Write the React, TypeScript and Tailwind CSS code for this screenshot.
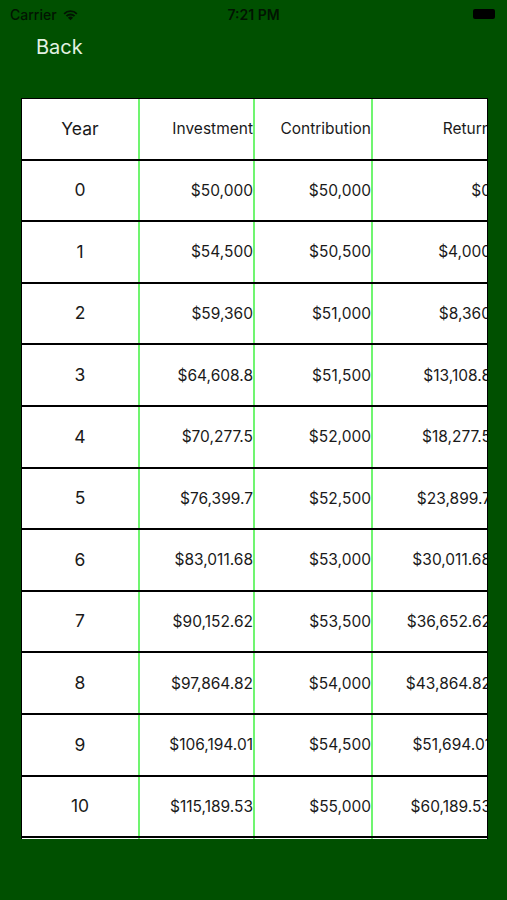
import React from "react";

type Row = { year: string; investment: string; contribution: string; ret: string };

const rows: Row[] = [
  { year: "0", investment: "$50,000", contribution: "$50,000", ret: "$0" },
  { year: "1", investment: "$54,500", contribution: "$50,500", ret: "$4,000" },
  { year: "2", investment: "$59,360", contribution: "$51,000", ret: "$8,360" },
  { year: "3", investment: "$64,608.8", contribution: "$51,500", ret: "$13,108.8" },
  { year: "4", investment: "$70,277.5", contribution: "$52,000", ret: "$18,277.5" },
  { year: "5", investment: "$76,399.7", contribution: "$52,500", ret: "$23,899.7" },
  { year: "6", investment: "$83,011.68", contribution: "$53,000", ret: "$30,011.68" },
  { year: "7", investment: "$90,152.62", contribution: "$53,500", ret: "$36,652.62" },
  { year: "8", investment: "$97,864.82", contribution: "$54,000", ret: "$43,864.82" },
  { year: "9", investment: "$106,194.01", contribution: "$54,500", ret: "$51,694.01" },
  { year: "10", investment: "$115,189.53", contribution: "$55,000", ret: "$60,189.53" },
];

const WifiIcon = () => (
  <svg width="17" height="13" viewBox="0 0 16 12" className="ml-[5px]">
    <path d="M8 11.5 L5.6 9 A3.4 3.4 0 0 1 10.4 9 Z" fill="#021402" />
    <path d="M3.6 7 A6.2 6.2 0 0 1 12.4 7 L11.2 8.2 A4.5 4.5 0 0 0 4.8 8.2 Z" fill="#021402" />
    <path d="M1.4 4.8 A9.3 9.3 0 0 1 14.6 4.8 L13.4 6 A7.6 7.6 0 0 0 2.6 6 Z" fill="#021402" />
  </svg>
);

const Sep = () => <div className="w-[2px] shrink-0 bg-[#70f570]" />;

const TableRow = ({ r }: { r: Row }) => (
  <div className="flex h-[61.6px] shrink-0 border-b-2 border-black bg-white text-[#1a1a1a]">
    <div className="flex w-[116px] shrink-0 items-center justify-center text-[17.5px]">{r.year}</div>
    <Sep />
    <div className="flex w-[113px] shrink-0 items-center justify-end text-[15.5px]">{r.investment}</div>
    <Sep />
    <div className="flex w-[116px] shrink-0 items-center justify-end text-[15.5px]">{r.contribution}</div>
    <Sep />
    <div className="flex w-[118px] shrink-0 items-center justify-end text-[15.5px]">{r.ret}</div>
  </div>
);

export default function App() {
  return (
    <div
      className="flex h-[900px] w-[507px] flex-col bg-[#005000]"
      style={{ fontFamily: "Inter, 'Liberation Sans', sans-serif" }}
    >
      <div className="flex h-[28px] items-center justify-between px-[10px] text-[14px] font-medium text-[#021402]">
        <div className="flex w-[120px] items-center">
          <span>Carrier</span>
          <WifiIcon />
        </div>
        <span className="font-semibold">7:21 PM</span>
        <div className="flex w-[120px] justify-end pr-[2px]">
          <div className="h-[10px] w-[22px] rounded-[2px] bg-black" />
        </div>
      </div>
      <div className="flex h-[38px] items-center pl-[36px] text-[20px] text-[#e2f2e2]">Back</div>
      <div className="ml-[21px] mt-[32px] flex h-[741px] w-[467px] flex-col overflow-hidden border-l border-r border-t border-black">
        <TableRow r={{ year: "Year", investment: "Investment", contribution: "Contribution", ret: "Return" }} />
        {rows.map((r) => (
          <TableRow key={r.year} r={r} />
        ))}
        <TableRow r={{ year: "11", investment: "", contribution: "", ret: "" }} />
      </div>
    </div>
  );
}
